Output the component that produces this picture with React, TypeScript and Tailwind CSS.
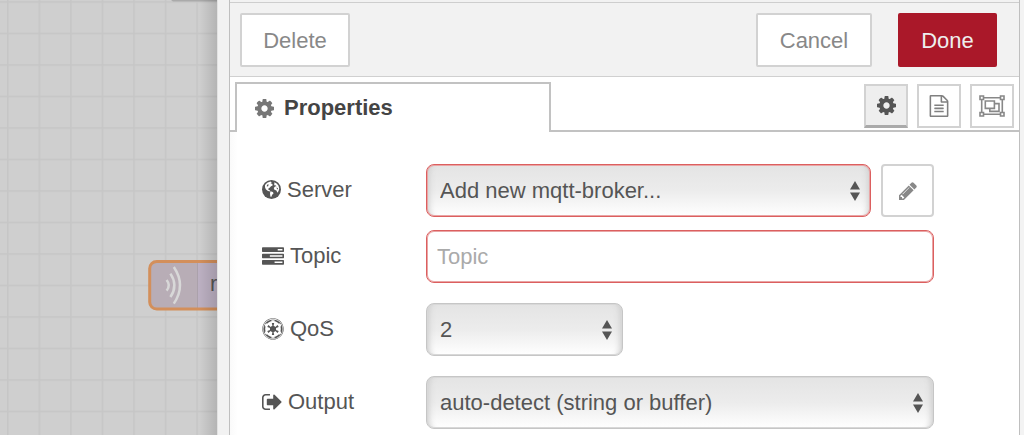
import type { ReactNode } from "react";
import { FaEmpire } from "react-icons/fa";

const COG =
  "M1152 896q0-106-75-181t-181-75-181 75-75 181 75 181 181 75 181-75 75-181zm512-109v222q0 12-8 23t-20 13l-185 28q-19 54-39 91 35 50 107 138 10 12 10 25t-9 23q-27 37-99 108t-94 71q-12 0-26-9l-138-108q-44 23-91 38-16 136-29 186-7 28-36 28h-222q-14 0-24.5-8.5t-11.5-21.5l-28-184q-49-16-90-37l-141 107q-10 9-25 9-14 0-25-11-126-114-165-168-7-10-7-23 0-12 8-23 15-21 51-66.5t54-70.5q-27-50-41-99l-183-27q-13-2-21-12.5t-8-23.5v-222q0-12 8-23t19-13l186-28q14-46 39-92-40-57-107-138-10-12-10-24 0-10 9-23 26-36 98.5-107.5t94.5-71.5q13 0 26 10l138 107q44-23 91-38 16-136 29-186 7-28 36-28h222q14 0 24.5 8.5t11.5 21.5l28 184q49 16 90 37l142-107q9-9 24-9 13 0 25 10 129 119 165 170 7 8 7 22 0 12-8 23-15 21-51 66.5t-54 70.5q26 50 41 98l183 28q13 2 21 12.5t8 23.5z";
const PENCIL =
  "M491 1536l91-91-235-235-91 91v107h128v128h107zm523-928q0-22-22-22-10 0-17 7l-542 542q-7 7-7 17 0 22 22 22 10 0 17-7l542-542q7-7 7-17zm-54-192l416 416-832 832h-416v-416zm683 96q0 53-37 90l-166 166-416-416 166-165q36-38 90-38 53 0 91 38l235 234q37 39 37 91z";
const FILE =
  "M1596 380q28 28 48 76t20 88v1152q0 40-28 68t-68 28h-1344q-40 0-68-28t-28-68v-1600q0-40 28-68t68-28h896q40 0 88 20t76 48zm-444-244v376h376q-10-29-22-41l-313-313q-12-12-41-22zm384 1528v-1024h-416q-40 0-68-28t-28-68v-416h-768v1536h1280zm-1024-864q0-14 9-23t23-9h704q14 0 23 9t9 23v64q0 14-9 23t-23 9h-704q-14 0-23-9t-9-23v-64zm736 224q14 0 23 9t9 23v64q0 14-9 23t-23 9h-704q-14 0-23-9t-9-23v-64q0-14 9-23t23-9h704zm0 256q14 0 23 9t9 23v64q0 14-9 23t-23 9h-704q-14 0-23-9t-9-23v-64q0-14 9-23t23-9h704z";
const TASKS =
  "M1024 1408h640v-128h-640v128zm-384-512h1024v-128h-1024v128zm640-512h384v-128h-384v128zm512 832v256q0 26-19 45t-45 19h-1664q-26 0-45-19t-19-45v-256q0-26 19-45t45-19h1664q26 0 45 19t19 45zm0-512v256q0 26-19 45t-45 19h-1664q-26 0-45-19t-19-45v-256q0-26 19-45t45-19h1664q26 0 45 19t19 45zm0-512v256q0 26-19 45t-45 19h-1664q-26 0-45-19t-19-45v-256q0-26 19-45t45-19h1664q26 0 45 19t19 45z";
const SIGN_OUT =
  "M704 1440q0 4 1 20t.5 26.5-3 23.5-10 19.5-20.5 6.5h-320q-119 0-203.5-84.5t-84.5-203.5v-704q0-119 84.5-203.5t203.5-84.5h320q13 0 22.5 9.5t9.5 22.5q0 4 1 20t.5 26.5-3 23.5-10 19.5-20.5 6.5h-320q-66 0-113 47t-47 113v704q0 66 47 113t113 47h312l11.5 1 11.5 3 8 5.5 7 9 2 13.5zm928-544q0 26-19 45l-544 544q-19 19-45 19t-45-19-19-45v-288h-448q-26 0-45-19t-19-45v-384q0-26 19-45t45-19h448v-288q0-26 19-45t45-19 45 19l544 544q19 19 19 45z";

function Glyph({ d, viewBox = "0 0 1792 1792", className }: { d: string; viewBox?: string; className: string }) {
  return (
    <svg viewBox={viewBox} className={className} fill="currentColor" aria-hidden="true">
      <path d={d} />
    </svg>
  );
}

function GlobeIcon() {
  return (
    <svg viewBox="0 0 19 19" className="h-[19px] w-[19px]" aria-hidden="true">
      <circle cx="9.5" cy="9.5" r="9.5" fill="currentColor" />
      <path
        d="M3 5 5.2 2.8 8.4 1.6 9.8 2.4 8.6 3.2 10.4 4 10.6 5.4 9 6.2 7.6 7.8 6.4 8.4 6.4 9.8 8.2 10.4 7.6 11.4 5.6 10.8 3.8 9.2 3 7.2z"
        fill="#fff"
      />
      <path d="M8.4 11.2 10.8 12 11.6 13.2 10.2 14.8 9.2 17 8.4 16.6 8 13.6z" fill="#fff" />
      <path
        d="M12.4 2.2 14.6 3.4 16.4 5.6 17.2 8.4 16.6 11 15.4 12.8 14.4 10.6 12.4 9.8 11.8 8 13 6.4 14.6 6.2 13.4 5.2 12.2 5.2z"
        fill="#fff"
      />
      <path d="M5 4.8 6.6 4.2 6.2 6.2 4.8 6.4zM14.4 7.6l1.4.4.2 1.4-1-.4z" fill="currentColor" />
    </svg>
  );
}

function ObjectGroupIcon() {
  return (
    <svg viewBox="0 0 26 22" className="h-[22px] w-[26px]" fill="none" stroke="currentColor" strokeWidth="1.6" aria-hidden="true">
      <path d="M4.500 2.700h17M4.500 19.300h17M2.700 4.500v13M23.300 4.500v13" />
      <path d="M1 1h3.500v3.500H1zM21.500 1H25v3.500h-3.500zM1 17.500h3.500V21H1zM21.500 17.500H25V21h-3.500z" />
      <path d="M6.300 6h9.100v7.400H6.300z" />
      <path d="M15.400 8.600h4.600v7.800h-9.200v-3" />
    </svg>
  );
}

function Canvas() {
  return (
    <div className="relative w-[217px] shrink-0 overflow-hidden bg-[#cfcfcf]">
      <svg className="absolute inset-0 h-full w-full" role="img" aria-label="Flow workspace">
        <defs>
          <pattern id="grid" x="7" y="1.2" width="31.55" height="31.5" patternUnits="userSpaceOnUse">
            <path d="M0 .8H31.55M.8 0V31.5" stroke="#c6c6c6" strokeWidth="1.5" />
          </pattern>
          <linearGradient id="edge">
            <stop offset="0" stopColor="#000" stopOpacity="0" />
            <stop offset="1" stopColor="#000" stopOpacity=".13" />
          </linearGradient>
        </defs>
        <rect width="100%" height="100%" fill="url(#grid)" />
        <path d="M171 0H217V1.5H173z" fill="#aaa" />
        <rect x="149.7" y="261.5" width="120" height="47.5" rx="7" fill="#bcb0c2" />
        <path d="M157 261.5H197.5V309H157a7 7 0 0 1-7-7V268.5a7 7 0 0 1 7-7z" fill="#b8adb6" />
        <path d="M197.5 262V308" stroke="#aba1ab" />
        <rect x="149.7" y="261.5" width="120" height="47.5" rx="7" fill="none" stroke="#d38f5b" strokeWidth="3" />
        <g fill="none" stroke="#d8d8d8" strokeWidth="2.5">
          <path d="M166.600 280q4.400 5.300 0 10.600M170.400 273.600q8 11.700 0 23.400M173.800 267q12.400 18.300 0 36.600" />
        </g>
        <text x="210" y="291" fontSize="22" fontFamily="Liberation Sans, sans-serif" fill="#555">
          r
        </text>
        <svg x="199" width="18" height="100%">
          <rect width="100%" height="100%" fill="url(#edge)" />
        </svg>
      </svg>
    </div>
  );
}

function Field({ id, label, icon, children }: { id: string; label: string; icon: ReactNode; children: ReactNode }) {
  return (
    <div className="flex items-center">
      <label htmlFor={id} className="flex w-[164px] shrink-0 items-center gap-1.5 pb-0.5">
        {icon}
        {label}
      </label>
      <div className="flex min-w-0 flex-1 gap-2.5">{children}</div>
    </div>
  );
}

function Select({ id, value, width, invalid }: { id: string; value: string; width: string; invalid?: boolean }) {
  return (
    <div className={`relative ${width}`}>
      <select
        id={id}
        className={`block h-[53px] w-full appearance-none rounded-lg border bg-linear-to-b from-[#e4e4e4] via-[#ececec] to-white pr-10 pl-[13px] text-[#555] ${
          invalid
            ? "border-[#dc5f5f] shadow-[inset_0_0_0_1px_#e9a5a5,inset_8px_0_6px_-6px_#cccccc,inset_-8px_0_6px_-6px_#cccccc]"
            : "border-[#c6c6c6] shadow-[inset_0_0_0_1px_#d8d8d8,inset_8px_0_6px_-6px_#cccccc,inset_-8px_0_6px_-6px_#cccccc]"
        }`}
      >
        <option>{value}</option>
      </select>
      <svg viewBox="0 0 10 20" className="pointer-events-none absolute top-[17px] right-[11px] h-5 w-2.5" fill="#555" aria-hidden="true">
        <path d="M5 0 10 8.500H0zM0 11.500H10L5 20z" />
      </svg>
    </div>
  );
}

export default function App() {
  const plain = "h-[54px] rounded-xs border-2 border-[#d2d2d2] bg-white pt-0.5 text-[#888]";
  const tabButton = "flex size-11 items-center justify-center border-2 border-[#d2d2d2]";
  return (
    <main className="flex min-h-screen overflow-hidden bg-[#f3f3f3] font-['Liberation_Sans',Arial,sans-serif] text-[22px] leading-7 text-[#555]">
      <Canvas />
      <div className="w-3 shrink-0 border-l border-[#e2e2e2] bg-[#f2f2f2]" />
      <section className="flex min-w-0 flex-1 flex-col border-x border-[#bfbfbf] bg-white">
        <header className="border-b border-[#d0d0d0] bg-[#f2f2f2] pt-0.5">
          <div className="flex items-center border-t border-[#cecece] pt-2.5 pr-[22px] pb-[9px] pl-2.5">
            <button type="button" className={`${plain} w-[110px]`}>Delete</button>
            <button type="button" className={`${plain} mr-[26px] ml-auto w-[116px]`}>Cancel</button>
            <button type="button" className="h-[54px] w-[99px] rounded-xs bg-[#aa1829] pt-0.5 text-[#eeeeee]">Done</button>
          </div>
        </header>

        <nav className="flex pt-[5px]">
          <div className="w-[5px] border-b-2 border-[#c2c2c2]" />
          <button type="button" className="flex h-[50px] w-[316px] items-center gap-2.5 border-2 border-b-0 border-[#c2c2c2] pl-[18px] font-bold text-[#444]">
            <Glyph d={COG} viewBox="128 128 1536 1536" className="size-[19px] text-[#777]" />
            Properties
          </button>
          <div className="flex flex-1 justify-end gap-[9px] border-b-2 border-[#c2c2c2] pt-0.5 pr-[5px]">
            <button type="button" aria-label="Properties" className="flex size-11 items-center justify-center border-2 border-b-3 border-[#d2d2d2] border-b-[#aaaaaa] bg-[#eeeeee] text-[#555]">
              <Glyph d={COG} viewBox="128 128 1536 1536" className="size-[19px]" />
            </button>
            <button type="button" aria-label="Description" className={`${tabButton} text-[#808080]`}>
              <Glyph d={FILE} className="size-[22px]" />
            </button>
            <button type="button" aria-label="Appearance" className={`${tabButton} text-[#888]`}>
              <ObjectGroupIcon />
            </button>
          </div>
        </nav>

        <form className="flex flex-1 flex-col gap-5 bg-linear-to-r from-[#fafafa] to-white to-1% pt-8 pr-[85px] pl-8">
          <div className="flex flex-col gap-[13px]">
            <Field id="server" label="Server" icon={<GlobeIcon />}>
              <Select id="server" value="Add new mqtt-broker..." width="flex-1" invalid />
              <button type="button" aria-label="Edit server" className="flex h-[53px] w-[53px] items-center justify-center rounded-sm border-2 border-[#d2d2d2] text-[#888]">
                <Glyph d={PENCIL} viewBox="128 128 1536 1536" className="size-[18px]" />
              </button>
            </Field>
            <Field id="topic" label="Topic" icon={<Glyph d={TASKS} viewBox="0 128 1792 1408" className="h-[18px] w-[22px]" />}>
              <input
                id="topic"
                type="text"
                placeholder="Topic"
                className="h-[53px] w-full rounded-lg border border-[#dc5f5f] bg-white px-2.5 shadow-[inset_0_0_0_1px_#e9a5a5] placeholder:text-[#aaaaaa]"
              />
            </Field>
          </div>
          <Field id="qos" label="QoS" icon={<FaEmpire className="size-[22px]" />}>
            <Select id="qos" value="2" width="w-[197px]" />
          </Field>
          <Field id="output" label="Output" icon={<Glyph d={SIGN_OUT} viewBox="64 128 1600 1536" className="h-[20px] w-[20px]" />}>
            <Select id="output" value="auto-detect (string or buffer)" width="flex-1" />
          </Field>
        </form>
      </section>
      <div className="w-1 shrink-0" />
    </main>
  );
}
